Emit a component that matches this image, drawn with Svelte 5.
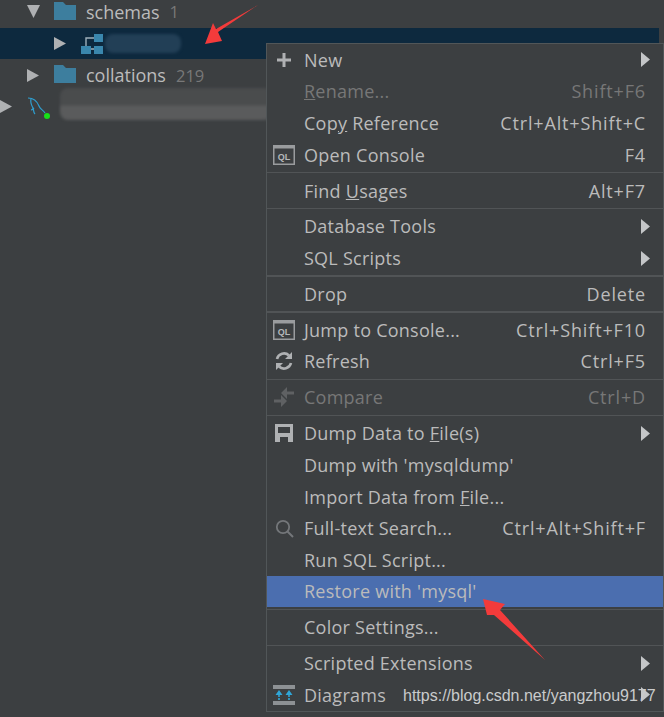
<script>
  const groups = [
    [
      { label: 'New', u: -1, icon: 'plus', sub: true },
      { label: 'Rename...', u: 0, key: 'Shift+F6', off: true },
      { label: 'Copy Reference', u: 3, key: 'Ctrl+Alt+Shift+C' },
      { label: 'Open Console', u: -1, key: 'F4', icon: 'ql' }
    ],
    [{ label: 'Find Usages', u: 5, key: 'Alt+F7' }],
    [
      { label: 'Database Tools', u: -1, sub: true },
      { label: 'SQL Scripts', u: -1, sub: true }
    ],
    [{ label: 'Drop', u: -1, key: 'Delete' }],
    [
      { label: 'Jump to Console...', u: -1, key: 'Ctrl+Shift+F10', icon: 'ql' },
      { label: 'Refresh', u: -1, key: 'Ctrl+F5', icon: 'refresh' }
    ],
    [{ label: 'Compare', u: -1, key: 'Ctrl+D', icon: 'compare', off: true }],
    [
      { label: 'Dump Data to File(s)', u: 13, icon: 'save', sub: true },
      { label: "Dump with 'mysqldump'", u: -1 },
      { label: 'Import Data from File...', u: 17 },
      { label: 'Full-text Search...', u: -1, key: 'Ctrl+Alt+Shift+F', icon: 'search' },
      { label: 'Run SQL Script...', u: -1 },
      { label: "Restore with 'mysql'", u: -1, active: true }
    ],
    [{ label: 'Color Settings...', u: -1 }],
    [
      { label: 'Scripted Extensions', u: -1, sub: true },
      { label: 'Diagrams', u: -1, icon: 'diagram', sub: true }
    ]
  ];
</script>

<div class="screen">
  <div class="tree">
    <div class="node depth2">
      <svg class="tw" viewBox="0 0 13 13"><path d="M0 0h13L6.5 13z" fill="#afb1b3" /></svg>
      <svg class="folder" viewBox="0 0 22 18"><path d="M0 0h9l3 3h10v15H0z" fill="#3d7e9e" /></svg>
      <span>schemas</span><span class="count">1</span>
    </div>
    <div class="node depth3 selected">
      <svg class="tw" viewBox="0 0 13 13"><path d="M0 0l12 6.5L0 13z" fill="#afb1b3" /></svg>
      <svg class="schema" viewBox="0 0 22 20">
        <path d="M5 12V4h9M10 15h4" fill="none" stroke="#9fb0bb" stroke-width="1.4" />
        <rect x="13" y="0" width="9" height="8" fill="#3a87ad" />
        <rect x="0" y="12" width="10" height="8" fill="#3a87ad" />
        <rect x="13" y="12" width="9" height="8" fill="#3a87ad" />
      </svg>
      <div class="smudge blue"></div>
    </div>
    <div class="node depth2">
      <svg class="tw" viewBox="0 0 13 13"><path d="M0 0l12 6.5L0 13z" fill="#afb1b3" /></svg>
      <svg class="folder" viewBox="0 0 22 18"><path d="M0 0h9l3 3h10v15H0z" fill="#3d7e9e" /></svg>
      <span>collations</span><span class="count">219</span>
    </div>
    <div class="node depth1">
      <svg class="tw" viewBox="0 0 13 13"><path d="M0 0l12 6.5L0 13z" fill="#afb1b3" /></svg>
      <svg class="dolphin" viewBox="0 0 24 24">
        <path d="M1 2c5 0 9 3 11 8 1 3 4 4 6 7M4 3c-1 4 1 7 2 9 1 2 0 4 2 6M7 12c-1 1-2 2-3 2" fill="none" stroke="#2f9fd0" stroke-width="1.2" />
        <circle cx="20" cy="20" r="3" fill="#18e018" />
      </svg>
      <div class="smudge gray"></div>
    </div>
  </div>

  <div class="menu">
    {#each groups as group, g}
      {#if g > 0}<div class="sep"></div>{/if}
      {#each group as item}
        <div class="row" class:off={item.off} class:active={item.active}>
          <span class="icon">
            {#if item.icon === 'plus'}
              <svg viewBox="0 0 16 16" width="16" height="16"><path d="M8 1v14M1 8h14" stroke="#afb1b3" stroke-width="3" /></svg>
            {:else if item.icon === 'ql'}
              <svg viewBox="0 0 22 20" width="22" height="20">
                <rect x="0" y="0" width="22" height="20" fill="#9a9c9e" />
                <rect x="1.5" y="3.5" width="19" height="15" fill="#3c3f41" />
                <text x="11" y="15" text-anchor="middle" class="ql">QL</text>
              </svg>
            {:else if item.icon === 'refresh'}
              <svg viewBox="0 0 20 20" width="20" height="20">
                <path d="M3 8a7.2 7.2 0 0 1 12-3.5M17 12a7.2 7.2 0 0 1-12 3.5" fill="none" stroke="#afb1b3" stroke-width="2.6" />
                <path d="M18 1v7h-7zM2 19v-7h7z" fill="#afb1b3" />
              </svg>
            {:else if item.icon === 'compare'}
              <svg viewBox="0 0 22 22" width="22" height="22">
                <path d="M21 7h-8M1 15h8" stroke="#5f6163" stroke-width="3" />
                <path d="M14 1v12l-6-6zM8 9v12l6-6z" fill="#5f6163" />
              </svg>
            {:else if item.icon === 'save'}
              <svg viewBox="0 0 18 18" width="18" height="18">
                <path fill-rule="evenodd" d="M0 0h18v18H0zM3 3v6h12V3zM5 13v5h8v-5z" fill="#afb1b3" />
              </svg>
            {:else if item.icon === 'search'}
              <svg viewBox="0 0 19 19" width="19" height="19">
                <circle cx="8" cy="8" r="6.2" fill="none" stroke="#74777a" stroke-width="1.8" />
                <path d="M12.5 12.5l5.5 5.5" stroke="#74777a" stroke-width="2" />
              </svg>
            {:else if item.icon === 'diagram'}
              <svg viewBox="0 0 22 20" width="22" height="20">
                <path d="M0 0h22v4H0zM0 16h22v4H0z" fill="#8d9194" />
                <path d="M6 15V9M16 15V9" stroke="#2fa6d8" stroke-width="1.6" stroke-dasharray="2 1" />
                <path d="M6 5l3.5 5h-7zM16 5l3.5 5h-7z" fill="#2fa6d8" />
              </svg>
            {/if}
          </span>
          <span class="label">
            {#if item.u >= 0}{item.label.slice(0, item.u)}<u>{item.label[item.u]}</u>{item.label.slice(item.u + 1)}{:else}{item.label}{/if}
          </span>
          {#if item.key}<span class="key">{item.key}</span>{/if}
          {#if item.sub}<svg class="sub" viewBox="0 0 9 15"><path d="M0 0l9 7.5L0 15z" fill="#c4c6c8" /></svg>{/if}
        </div>
      {/each}
    {/each}
  </div>

  <svg class="arrows" viewBox="0 0 664 717">
    <path d="M258 5L218 32 222 41 205 44 213 23 216 29z" fill="#f33b3b" />
    <path d="M483 599L505 604 500 610 545 660 494 615 487 615z" fill="#f33b3b" />
  </svg>
  <div class="watermark">https://blog.csdn.net/yangzhou9177</div>
</div>

<style>
  :global(body) {
    margin: 0;
    background: #3c3f41;
  }
  .screen {
    position: relative;
    width: 664px;
    height: 717px;
    overflow: hidden;
    background: #3c3f41;
    font-family: "Open Sans", "Noto Sans", sans-serif;
    font-size: 18px;
    letter-spacing: 0.25px;
    color: #bbbbbb;
  }
  .tree {
    margin-top: -4px;
    width: 659px;
  }
  .node {
    display: flex;
    align-items: center;
    height: 31.7px;
    position: relative;
    letter-spacing: 0;
  }
  .depth1 { padding-left: 0; }
  .depth2 { padding-left: 27px; }
  .depth3 { padding-left: 54px; }
  .selected { background: #0d293e; }
  .tw {
    width: 13px;
    height: 13px;
    flex: none;
  }
  .folder {
    width: 22px;
    height: 18px;
    margin-left: 14px;
    margin-right: 10px;
    margin-top: -2px;
  }
  .count {
    margin-left: 10px;
    font-size: 16.5px;
    color: #787878;
  }
  .schema {
    width: 22px;
    height: 20px;
    margin-left: 14px;
  }
  .dolphin {
    width: 24px;
    height: 24px;
    margin-left: 14px;
    margin-top: 2px;
  }
  .smudge {
    filter: blur(1.5px);
    border-radius: 8px;
  }
  .blue {
    width: 76px;
    height: 19px;
    margin-left: 2px;
    background: #223f56;
  }
  .gray {
    width: 212px;
    height: 32px;
    margin-left: 9px;
    margin-bottom: 6px;
    background: linear-gradient(#4a4c4d 0 52%, #5a5b5c 58% 100%);
  }
  .menu {
    position: absolute;
    left: 266px;
    top: 43px;
    width: 396px;
    border: 1px solid #515658;
    background: #3c3f41;
    box-sizing: content-box;
    height: 667px;
  }
  .row {
    display: flex;
    align-items: center;
    height: 31.62px;
    padding-left: 5px;
    padding-right: 13px;
    box-sizing: border-box;
    position: relative;
  }
  .active {
    background: #4b6eaf;
  }
  .off {
    color: #777777;
  }
  .icon {
    width: 32px;
    flex: none;
    display: flex;
    align-items: center;
    justify-content: center;
    padding-right: 8px;
    box-sizing: border-box;
  }
  .icon svg { display: block; }
  .label { white-space: pre; }
  .key {
    margin-left: auto;
    padding-right: 4px;
    letter-spacing: 0.85px;
  }
  .sub {
    position: absolute;
    right: 13px;
    width: 9px;
    height: 15px;
  }
  .sep {
    height: 4.3px;
    box-sizing: border-box;
    padding-top: 1.6px;
  }
  .sep::before {
    content: "";
    display: block;
    height: 1.2px;
    background: #515456;
  }
  .ql {
    font: bold 9px "Liberation Sans", sans-serif;
    letter-spacing: 0;
    fill: #b5b7b9;
  }
  .arrows {
    position: absolute;
    inset: 0;
    width: 664px;
    height: 717px;
    pointer-events: none;
  }
  .watermark {
    position: absolute;
    left: 403px;
    top: 687px;
    font: 16px "Liberation Sans", sans-serif;
    letter-spacing: 0;
    color: #c9cbcc;
    white-space: nowrap;
  }
</style>
